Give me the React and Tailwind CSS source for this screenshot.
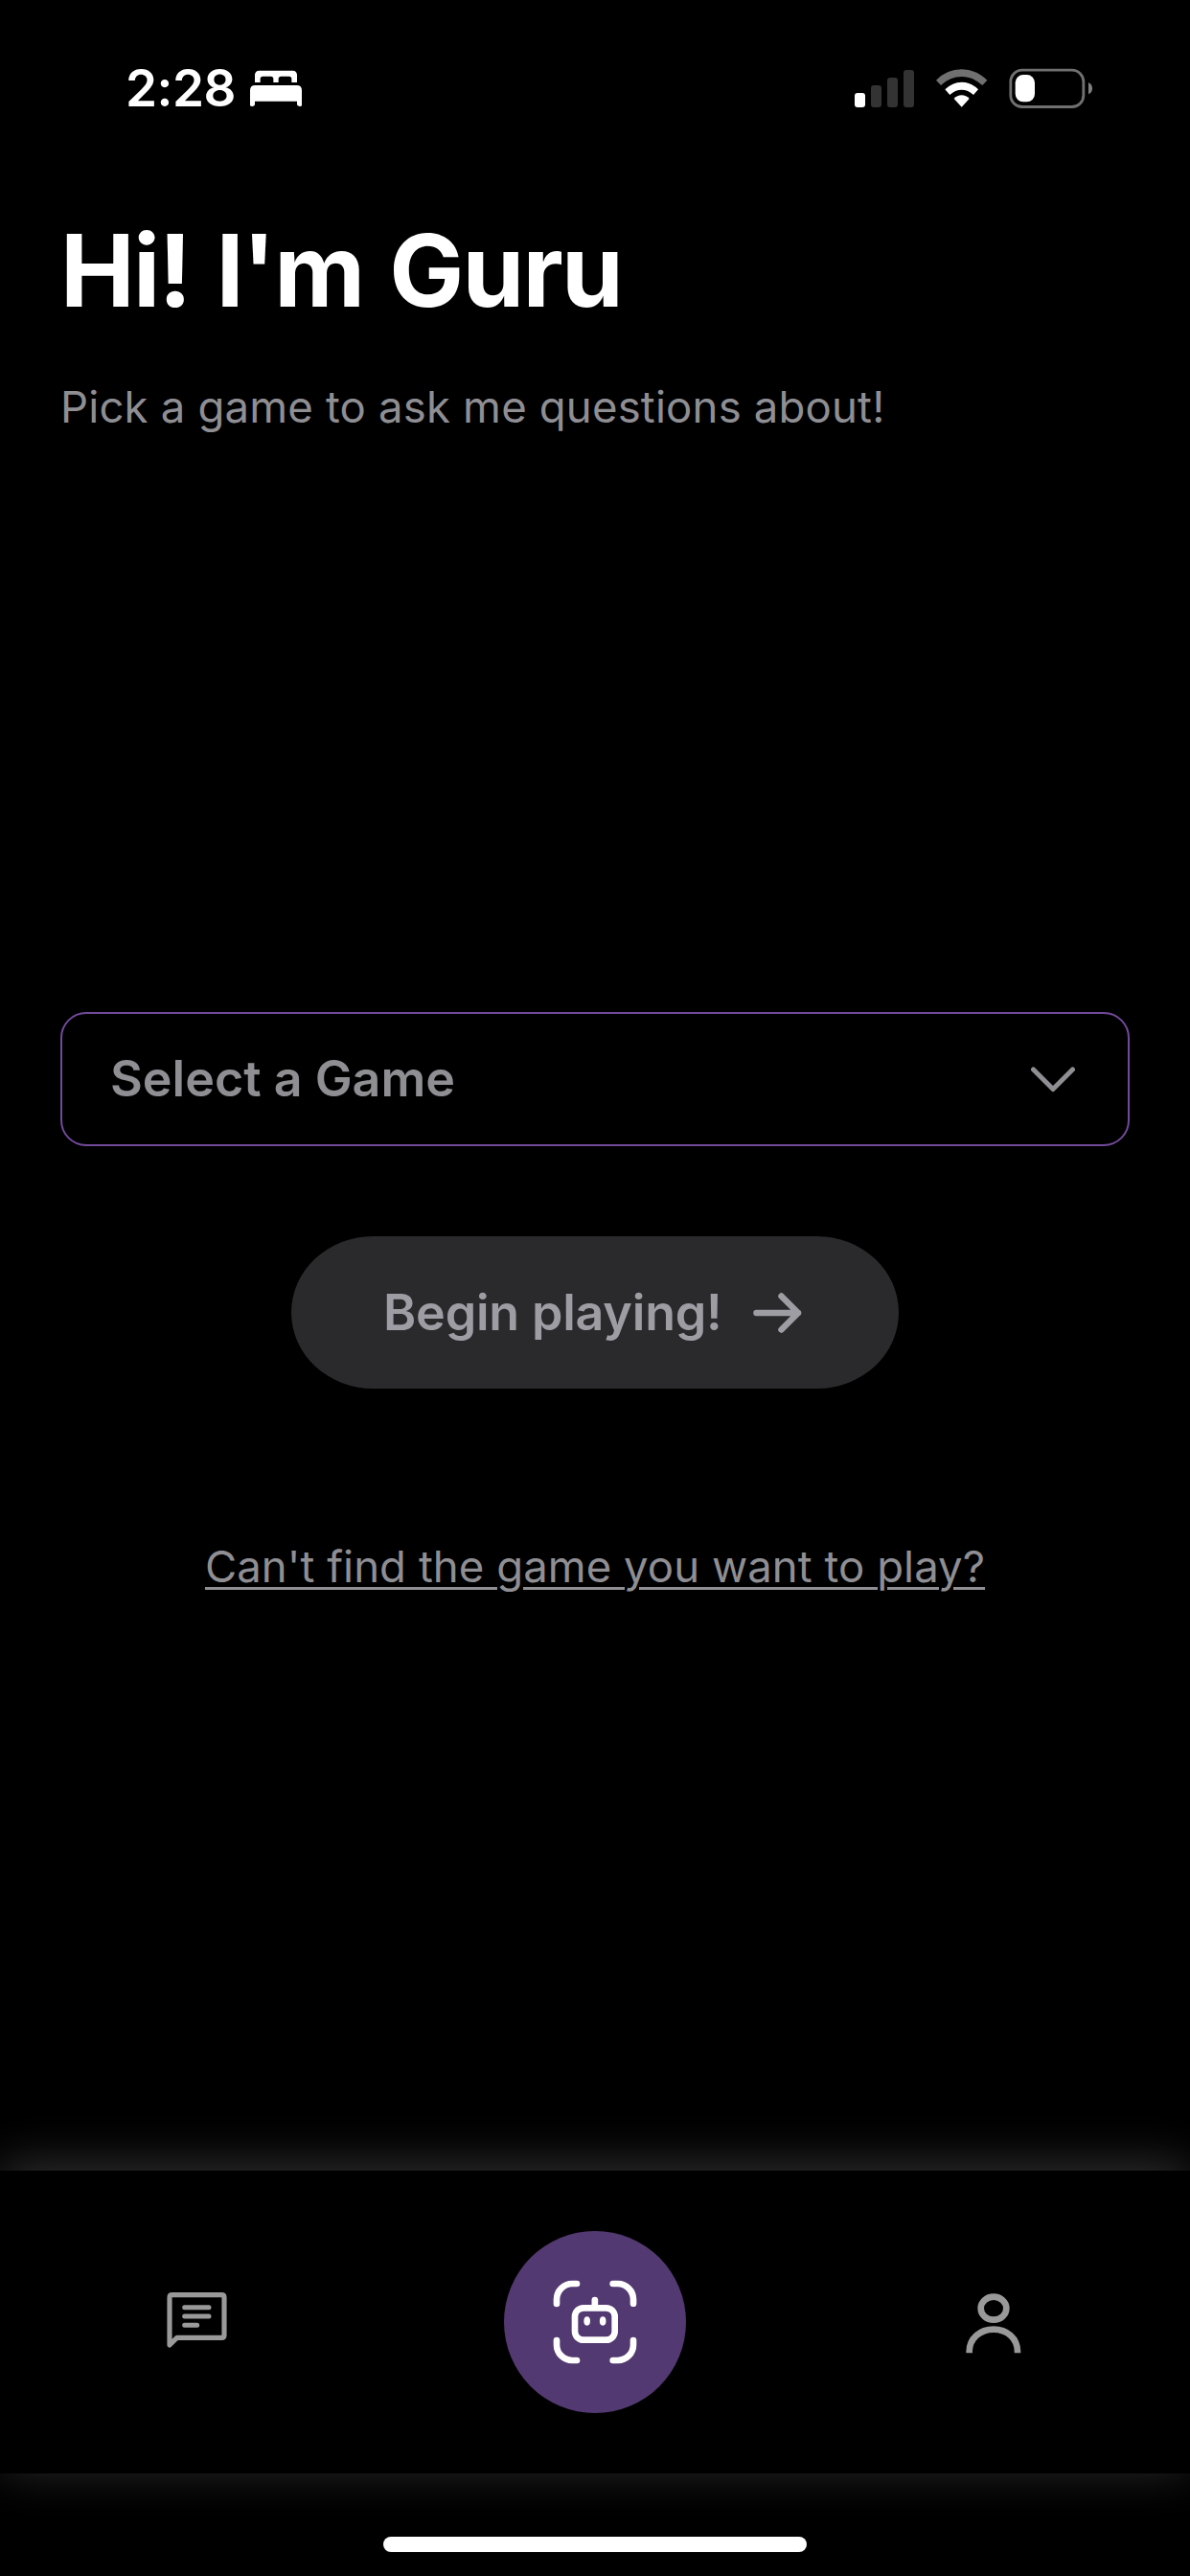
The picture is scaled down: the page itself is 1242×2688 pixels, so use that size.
function BedIcon() {
  return (
    <svg className="ml-[15px] h-[38px] w-[54px]" viewBox="0 0 162 114" fill="#fff">
      <path d="M15 39V16Q15 2 29 2H133Q147 2 147 16V39H130V28Q130 20 122 20H97Q89 20 89 28V39H73V28Q73 20 65 20H40Q32 20 32 28V39Z" />
      <path d="M0 112V64Q0 48 16 48H146Q162 48 162 64V112Q158 115 154 113.500Q147 113 147 107V98H15V107Q15 113 8 114Q2 114 0 112Z" />
    </svg>
  );
}

function SignalIcon() {
  return (
    <div className="flex h-10 items-end gap-[6px]">
      <div className="h-[15px] w-[11px] rounded-[3px] bg-white" />
      <div className="h-[23px] w-[11px] rounded-[3px] bg-[#333]" />
      <div className="h-[31px] w-[11px] rounded-[3px] bg-[#333]" />
      <div className="h-[39px] w-[11px] rounded-[3px] bg-[#333]" />
    </div>
  );
}

function WifiIcon() {
  return (
    <svg className="ml-[23px] h-10 w-[54px]" viewBox="317 66 162 120">
      <path d="M317 101Q351 67 397 67T477 101L462 117Q433 90 397 90T332 117Z" fill="#707070" />
      <path d="M345 130Q368 107 397 107T449 130L434 147Q417 131 397 131T360 147Z" fill="#fff" />
      <path d="M373 159Q383 148 397 148T421 159L397 185Z" fill="#fff" />
    </svg>
  );
}

function BatteryIcon() {
  return (
    <svg className="ml-[22px] h-[42px] w-[88px]" viewBox="546 62 264 126">
      <rect x="551.500" y="68.500" width="228" height="115" rx="36" fill="none" stroke="#707070" strokeWidth="8.500" />
      <rect x="566" y="83" width="61" height="85" rx="25" fill="#fff" />
      <path d="M795 107Q807 113 807 126T795 144Z" fill="#808080" />
    </svg>
  );
}

function ChatIcon() {
  return (
    <svg className="mb-[4px] h-[58px] w-[63px]" viewBox="72 95 189 174" fill="none" stroke="#999" strokeLinejoin="round" strokeLinecap="round">
      <path d="M81 260V111Q81 103 89 103H244Q252 103 252 111V229Q252 237 244 237H104Z" strokeWidth="15.500" />
      <path d="M128 142H204M128 170H204M128 198H167" strokeWidth="15" />
    </svg>
  );
}

function PersonIcon() {
  return (
    <svg className="mt-[2px] h-[63px] w-[58px]" viewBox="83 97 174 189" fill="none" stroke="#999" strokeWidth="20">
      <ellipse cx="170" cy="144" rx="40" ry="36" />
      <path d="M94 284V280C94 238 128 210 170 210S245 238 245 280V284" />
    </svg>
  );
}

function RobotIcon() {
  return (
    <svg className="h-[88px] w-[88px]" viewBox="233 237 264 264" fill="none" stroke="#fff" strokeWidth="20" strokeLinecap="round">
      <path d="M245 312V298A49 49 0 0 1 294 249H308M421 249H436A49 49 0 0 1 485 298V311M485 426V440A49 49 0 0 1 436 489H421M308 489H294A49 49 0 0 1 245 440V426" />
      <rect x="302" y="325" width="125" height="100" rx="27" />
      <path d="M364.500 300V322" />
      <ellipse cx="340" cy="366" rx="10" ry="14" fill="#fff" stroke="none" />
      <ellipse cx="389.500" cy="366" rx="10" ry="14" fill="#fff" stroke="none" />
    </svg>
  );
}

export default function App() {
  return (
    <div className="flex h-[2688px] w-[1242px] flex-col overflow-hidden bg-black font-['Inter',sans-serif] whitespace-nowrap">
      <header className="flex h-[184px] shrink-0 items-start justify-between pt-[71px] pr-[101px] pl-[131px]">
        <div className="flex h-[42px] items-center">
          <span className="text-[53px] leading-[42px] font-semibold tracking-[-0.5px] text-white">2:28</span>
          <BedIcon />
        </div>
        <div className="flex h-[42px] items-center">
          <SignalIcon />
          <WifiIcon />
          <BatteryIcon />
        </div>
      </header>

      <main className="flex h-[2081px] shrink-0 flex-col px-[63px]">
        <h1 className="mt-[34px] h-[128px] text-[104px] leading-[128px] font-bold tracking-[-1.8px] text-white [word-spacing:4px]">Hi! I'm Guru</h1>
        <p className="mt-[49px] h-[60px] text-[45.5px] leading-[60px] tracking-[0.18px] text-[#8e8e93]">Pick a game to ask me questions about!</p>

        <button className="mt-[601px] flex h-[140px] items-center justify-between rounded-[27px] border-2 border-[#714a9b] pr-[54px] pl-[50px]">
          <span className="text-[52px] font-semibold text-[#8e8e93]">Select a Game</span>
          <svg className="h-[27px] w-[48px]" viewBox="0 0 48 27" fill="none" stroke="#8e8e93" strokeWidth="5" strokeLinecap="round" strokeLinejoin="round">
            <path d="M3.500 3L24 23.500L44.500 3" />
          </svg>
        </button>

        <button className="mt-[94px] flex h-[159px] w-[634px] items-center self-center rounded-[86px/80px] bg-[#2a2a2c] pl-[96px]">
          <span className="text-[52px] font-semibold tracking-[-0.2px] text-[#9e9da4]">Begin playing!</span>
          <svg className="mr-[101px] ml-auto h-[42px] w-[51px]" viewBox="0 0 51 42" fill="none" stroke="#9e9da4" strokeWidth="6.500" strokeLinecap="round" strokeLinejoin="round">
            <path d="M3.500 21H47M29.500 3.500L47 21L29.500 38.500" />
          </svg>
        </button>

        <a className="mt-[156px] self-center text-[45.5px] leading-[60px] tracking-[0.05px] text-[#8e8e93] underline decoration-[3px] underline-offset-[5px]">Can't find the game you want to play?</a>
      </main>

      <nav className="flex h-[316px] shrink-0 items-center bg-black shadow-[0_-6px_48px_rgba(255,255,255,0.2)]">
        <div className="flex w-[411px] justify-center"><ChatIcon /></div>
        <div className="flex flex-1 justify-center">
          <div className="flex size-[190px] items-center justify-center rounded-full bg-[#533971]"><RobotIcon /></div>
        </div>
        <div className="flex w-[411px] justify-center"><PersonIcon /></div>
      </nav>

      <div className="mx-auto mt-[66px] h-[16px] w-[442px] shrink-0 rounded-full bg-white" />
    </div>
  );
}
